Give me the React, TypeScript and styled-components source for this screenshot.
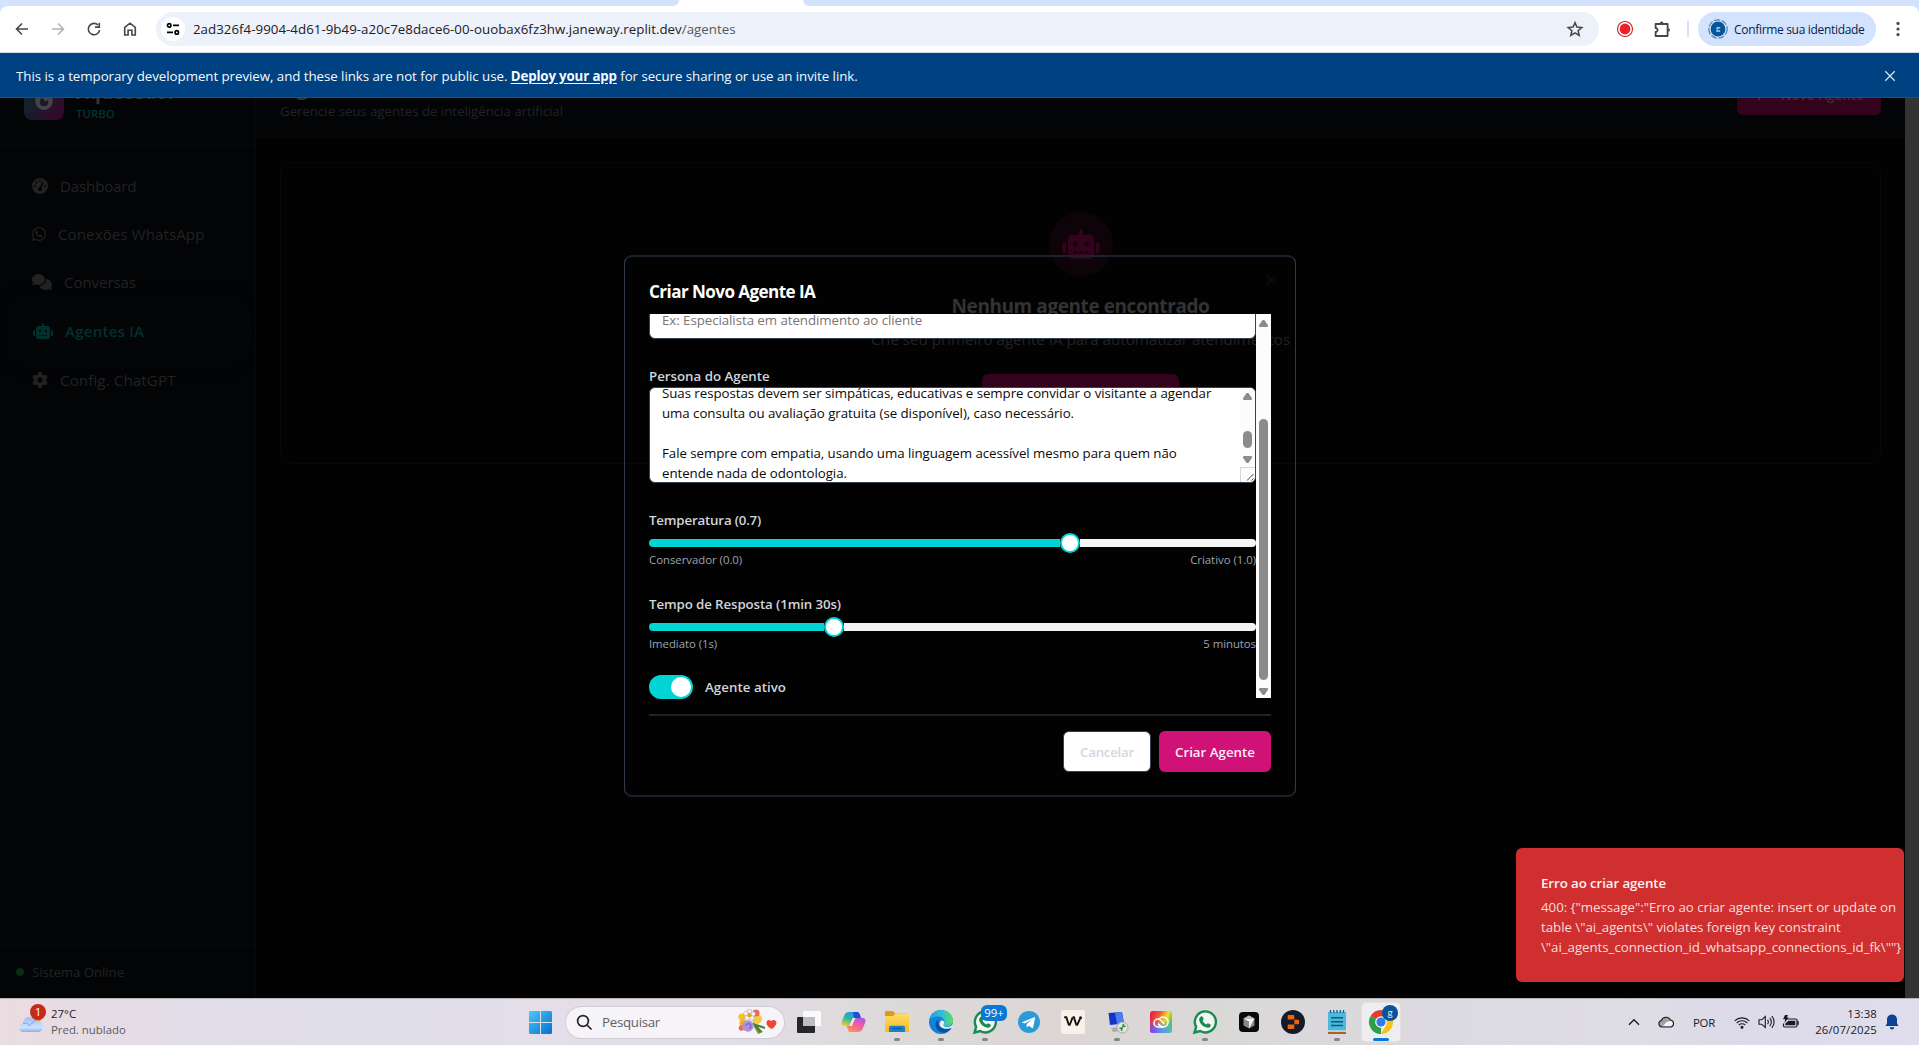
import React from "react";
import styled, { createGlobalStyle, css } from "styled-components";
import {
  FaComments,
  FaFire,
  FaGaugeHigh,
  FaGear,
  FaPlus,
  FaRobot,
  FaWhatsapp,
} from "react-icons/fa6";

const GlobalStyle = createGlobalStyle`
  *, *::before, *::after { box-sizing: border-box; }
  body {
    margin: 0;
    background: #000;
    font-family: "Open Sans", "Noto Sans", sans-serif;
    font-size: 13.3px;
    overflow: hidden;
  }
  svg { display: block; flex: none; }
  button { font-family: inherit; border: 0; margin: 0; padding: 0; background: none; }
`;

const Screen = styled.div`
  width: 1919px;
  height: 1045px;
  display: flex;
  flex-direction: column;
  overflow: hidden;
  white-space: nowrap;
`;

/* ---------- browser ---------- */

const Browser = styled.header`
  background: #d3e3fd;
  flex: none;
`;

const TabStrip = styled.div`
  height: 6px;
  display: flex;
  gap: 124px;
  background: #fff;
`;

const TabEdge = styled.div<{ $side: "left" | "right" }>`
  background: #d3e3fd;
  ${(p) =>
    p.$side === "left"
      ? css`
          width: 679px;
          border-bottom-right-radius: 8px;
        `
      : css`
          flex: 1;
          border-bottom-left-radius: 8px;
        `}
`;

const Toolbar = styled.div`
  height: 47px;
  display: flex;
  align-items: center;
  background: #fff;
  border-radius: 8px 8px 0 0;
  border-bottom: 1px solid #d9dde0;
  padding-left: 4px;
`;

const NavButton = styled.span<{ $dim?: boolean }>`
  width: 36px;
  display: flex;
  justify-content: center;
  color: ${(p) => (p.$dim ? "#b0b1b2" : "#474747")};
`;

const AddressBar = styled.div`
  width: 1444px;
  height: 34px;
  margin-left: 8px;
  border-radius: 17px;
  background: #ecf1fa;
  display: flex;
  align-items: center;
  padding: 0 15px 0 5px;
`;

const SiteInfo = styled.span`
  width: 24px;
  height: 24px;
  border-radius: 50%;
  background: #fff;
  display: flex;
  align-items: center;
  justify-content: center;
  margin-right: 8px;
`;

const Url = styled.span`
  flex: 1;
  color: #1f2023;
  letter-spacing: 0.03px;
  span {
    color: #55585c;
  }
`;

const ToolIcons = styled.div`
  display: flex;
  align-items: center;
`;

const ToolSlot = styled.span<{ $width: number }>`
  width: ${(p) => p.$width}px;
  display: flex;
  justify-content: center;
`;

const ToolDivider = styled.span`
  width: 2px;
  height: 16px;
  background: #d3e3fd;
  margin-left: 8px;
`;

const ProfileChip = styled.div`
  width: 178px;
  height: 34px;
  border-radius: 17px;
  background: #d3e3fd;
  margin-left: 9px;
  padding-left: 10px;
  display: flex;
  align-items: center;
  gap: 6px;
  color: #041e49;
  font-size: 12px;
  letter-spacing: -0.32px;
`;

/* ---------- preview banner ---------- */

const Banner = styled.div`
  height: 45px;
  flex: none;
  background: #004182;
  border-bottom: 1px solid #15508f;
  display: flex;
  align-items: center;
  justify-content: space-between;
  padding: 1px 23px 0 16px;
  color: #f5f9fc;
  font-weight: 500;
  letter-spacing: -0.045px;
  b {
    font-weight: 700;
    letter-spacing: -0.15px;
    text-decoration: underline;
    text-underline-offset: 2px;
  }
`;

/* ---------- application ---------- */

const Viewport = styled.div`
  position: relative;
  height: 900px;
  flex: none;
  display: flex;
  background: #020202;
  overflow: hidden;
`;

const Sidebar = styled.aside`
  width: 256px;
  background: #030406;
  border-right: 1px solid #07090c;
  display: flex;
  flex-direction: column;
`;

const Brand = styled.div`
  height: 48px;
  overflow: hidden;
  display: flex;
  align-items: flex-end;
  padding: 0 24px 23px;
  border-bottom: 1px solid #07090c;
`;

const BrandRow = styled.div`
  display: flex;
  align-items: center;
  gap: 12px;
`;

const BrandMark = styled.div`
  width: 40px;
  height: 40px;
  border-radius: 8px;
  background: linear-gradient(135deg, #00302f, #38042a);
  color: #484348;
  display: flex;
  align-items: center;
  justify-content: center;
`;

const BrandName = styled.div`
  font-size: 19px;
  line-height: 28px;
  font-weight: 700;
  letter-spacing: -0.25px;
  color: #333;
`;

const BrandTier = styled.div`
  font-size: 11.4px;
  line-height: 16px;
  font-weight: 600;
  color: #013531;
`;

const Nav = styled.nav`
  flex: 1;
  padding: 16px 16px 0;
`;

const NavItem = styled.div<{ $active?: boolean; $iconWidth: number; $ls: number }>`
  height: ${(p) => (p.$active ? 50 : 48)}px;
  padding: 0 16px;
  display: flex;
  align-items: center;
  gap: 12px;
  font-size: 15.2px;
  letter-spacing: ${(p) => p.$ls}px;
  color: #222;
  svg {
    width: ${(p) => p.$iconWidth}px;
    height: 16px;
  }
  ${(p) =>
    p.$active &&
    css`
      border: 1px solid #04080a;
      border-radius: 8px;
      color: #003130;
      font-weight: 600;
      background: #030506;
      box-shadow: 0 0 20px #030a0b;
    `}
`;

const SidebarFooter = styled.div`
  height: 53px;
  border-top: 1px solid #07090c;
  padding: 0 16px;
  display: flex;
  align-items: center;
  gap: 8px;
  color: #222;
  letter-spacing: -0.08px;
`;

const OnlineDot = styled.span`
  width: 8px;
  height: 8px;
  border-radius: 50%;
  background: #072d15;
`;

const Main = styled.main`
  flex: 1;
  display: flex;
  flex-direction: column;
`;

const PageHeader = styled.div`
  height: 40px;
  overflow: hidden;
  background: #030406;
  border-bottom: 1px solid #07090c;
  padding: 0 24px 16px;
  display: flex;
  align-items: flex-end;
  justify-content: space-between;
`;

const PageTitle = styled.div`
  font-size: 22.8px;
  line-height: 30px;
  font-weight: 700;
  color: #333;
  letter-spacing: 0.1px;
`;

const PageSubtitle = styled.div`
  line-height: 20px;
  color: #222;
  letter-spacing: -0.04px;
`;

const PinkButton = styled.div<{ $width: number }>`
  width: ${(p) => p.$width}px;
  height: 40px;
  border-radius: 6px;
  background: #33031e;
  color: #3d2f37;
  font-weight: 600;
  display: flex;
  align-items: center;
  padding: 0 16px;
  gap: 16px;
  letter-spacing: 0.06px;
  svg {
    width: 12px;
    height: 14px;
  }
`;

const HeaderAction = styled.div`
  padding-bottom: 6px;
`;

const PageBody = styled.div`
  flex: 1;
  padding: 24px;
`;

const EmptyCard = styled.section`
  height: 302px;
  border: 1px solid #07080a;
  border-radius: 12px;
  padding: 49px 48px 48px;
  display: flex;
  flex-direction: column;
  align-items: center;
`;

const EmptyIcon = styled.div`
  width: 64px;
  height: 64px;
  border-radius: 50%;
  background: #0d0309;
  color: #33031e;
  display: flex;
  align-items: center;
  justify-content: center;
  margin-bottom: 16px;
  svg {
    width: 38px;
    height: 30px;
  }
`;

const EmptyTitle = styled.h3`
  margin: 0 0 7px;
  font-size: 19px;
  line-height: 28px;
  font-weight: 700;
  letter-spacing: -0.42px;
  color: #333;
`;

const EmptyText = styled.p`
  margin: 0 0 23px;
  font-size: 15.2px;
  line-height: 24px;
  letter-spacing: -0.03px;
  color: #222;
`;

const PageScroll = styled.div`
  width: 14px;
  background: #333;
`;

/* ---------- dialog ---------- */

const Dialog = styled.div`
  position: absolute;
  left: 624px;
  top: 157px;
  width: 672px;
  height: 542px;
  border: solid #303a48;
  border-width: 2px 1px;
  border-top-color: #1c222c;
  border-bottom-color: #1c222c;
  border-radius: 8px;
  padding: 24px;
`;

const DialogHead = styled.div`
  height: 20px;
  display: flex;
  justify-content: space-between;
  margin-bottom: 13px;
  svg {
    margin: -7px -6px 0 0;
  }
`;

const DialogTitle = styled.h2`
  margin: 0;
  font-size: 17.1px;
  line-height: 21px;
  font-weight: 700;
  letter-spacing: -0.58px;
  color: #fff;
`;

const ScrollArea = styled.div`
  height: 385px;
  display: flex;
  overflow: hidden;
`;

const Form = styled.div`
  flex: 1;
`;

const TextField = styled.div`
  height: 40px;
  margin-top: -15px;
  border: 1px solid #374151;
  border-radius: 6px;
  background: #fff;
  padding: 1px 12px 0;
  display: flex;
  align-items: center;
  color: #7c756f;
  letter-spacing: -0.06px;
`;

const Label = styled.div<{ $ls: number; $top: number; $bottom: number }>`
  margin: ${(p) => p.$top}px 0 ${(p) => p.$bottom}px;
  line-height: 14px;
  font-weight: 600;
  color: #d1d5db;
  letter-spacing: ${(p) => p.$ls}px;
`;

const TextArea = styled.div`
  height: 96px;
  border: 1px solid #374151;
  border-radius: 6px;
  background: #fff;
  display: flex;
  overflow: hidden;
`;

const TextContent = styled.div`
  flex: 1;
  margin-top: -5px;
  padding-left: 12px;
  line-height: 20px;
  color: #0c0a09;
  white-space: pre;
  letter-spacing: -0.055px;
`;

const ScrollTrack = styled.div<{ $height: number }>`
  width: 15px;
  height: ${(p) => p.$height}px;
  background: #fcfcfc;
  display: flex;
  flex-direction: column;
  align-items: center;
`;

const Arrow = styled.span<{ $down?: boolean; $before: number }>`
  width: 9px;
  height: 7px;
  margin-top: ${(p) => p.$before}px;
  background: #8b8b8b;
  clip-path: ${(p) =>
    p.$down
      ? "polygon(0 8%, 10% 0, 90% 0, 100% 8%, 100% 25%, 60% 100%, 40% 100%, 0 25%)"
      : "polygon(0 92%, 10% 100%, 90% 100%, 100% 92%, 100% 75%, 60% 0, 40% 0, 0 75%)"};
`;

const Thumb = styled.span<{ $before: number; $length: number }>`
  width: 9px;
  height: ${(p) => p.$length}px;
  margin-top: ${(p) => p.$before}px;
  border-radius: 5px;
  background: #8b8b8b;
`;

const Resizer = styled.span`
  width: 15px;
  height: 15px;
  margin-top: auto;
  border: 1px solid #d6d6d6;
  border-width: 1px 0 0 1px;
`;

const Slider = styled.div`
  height: 20px;
  display: flex;
  align-items: center;
`;

const SliderFill = styled.span<{ $width: number }>`
  width: ${(p) => p.$width}px;
  height: 8px;
  border-radius: 4px 0 0 4px;
  background: #00d4d4;
`;

const SliderKnob = styled.span`
  width: 20px;
  height: 20px;
  border-radius: 50%;
  border: 2px solid #00d4d4;
  background: #fff;
`;

const SliderRest = styled.span`
  flex: 1;
  height: 8px;
  border-radius: 0 4px 4px 0;
  background: #f5f5f4;
`;

const Range = styled.div<{ $ls: number }>`
  display: flex;
  justify-content: space-between;
  margin-top: -1px;
  font-size: 11.4px;
  line-height: 16px;
  color: #9ca3af;
  letter-spacing: ${(p) => p.$ls}px;
`;

const SwitchRow = styled.div`
  margin-top: 23px;
  height: 24px;
  display: flex;
  align-items: center;
  gap: 12px;
  font-weight: 600;
  color: #d1d5db;
  letter-spacing: 0.04px;
`;

const Switch = styled.span`
  width: 44px;
  height: 24px;
  border-radius: 12px;
  background: #00d4d4;
  padding: 2px;
  display: flex;
  justify-content: flex-end;
  &::after {
    content: "";
    width: 20px;
    height: 20px;
    border-radius: 50%;
    background: #fff;
  }
`;

const DialogFooter = styled.div`
  margin-top: 15px;
  border-top: 2px solid #1d222c;
  padding-top: 15px;
  display: flex;
  justify-content: flex-end;
  gap: 8px;
`;

const Button = styled.button<{ $primary?: boolean }>`
  width: ${(p) => (p.$primary ? 112 : 88)}px;
  height: 41px;
  border-radius: 6px;
  font-size: 13.3px;
  font-weight: 600;
  background: ${(p) => (p.$primary ? "#cf1178" : "#fff")};
  color: ${(p) => (p.$primary ? "#fdeef6" : "#d4d7dd")};
  border: ${(p) => (p.$primary ? "0" : "1px solid #374151")};
  letter-spacing: ${(p) => (p.$primary ? 0 : -0.25)}px;
`;

const Toast = styled.div`
  position: absolute;
  left: 1516px;
  top: 750px;
  width: 388px;
  height: 134px;
  border-radius: 6px;
  background: #cf2f2f;
  padding: 25px;
  line-height: 20px;
`;

const ToastTitle = styled.div`
  font-weight: 600;
  color: #fbf3f2;
  margin-bottom: 4px;
  letter-spacing: -0.09px;
`;

const ToastText = styled.div`
  color: #f6dedd;
  white-space: pre;
  letter-spacing: -0.04px;
`;

/* ---------- taskbar ---------- */

const Taskbar = styled.footer`
  height: 47px;
  flex: none;
  display: flex;
  align-items: center;
  border-top: 1px solid #b5b3b6;
  background: linear-gradient(
    90deg,
    #eadce1 0%,
    #e3dde8 9%,
    #dfdee9 18%,
    #e3dee9 27%,
    #e2dde6 38%,
    #dcd9d9 47%,
    #dcd7d5 56%,
    #dad8d8 65%,
    #dcdae2 77%,
    #dfdde3 84%,
    #dcdae8 90%,
    #e0deec 100%
  );
`;

const Weather = styled.div`
  width: 518px;
  padding-left: 18px;
  display: flex;
  align-items: center;
  gap: 4px;
  svg {
    margin-top: -8px;
  }
`;

const WeatherText = styled.div`
  font-size: 11.4px;
  line-height: 16px;
  color: #1c1a1c;
  div + div {
    color: #5d5a60;
  }
`;

const Slot = styled.div<{ $active?: boolean }>`
  width: 44px;
  height: 46px;
  display: grid;
  grid-template-rows: 39px 3px;
  justify-items: center;
  align-items: center;
  align-content: start;
  svg {
    margin-top: 7px;
    overflow: visible;
  }
  ${(p) =>
    p.$active &&
    css`
      width: 38px;
      height: 38px;
      margin: 0 3px;
      grid-template-rows: 35px 3px;
      border-radius: 4px;
      background: #eeedf0;
      box-shadow: 0 0 0 1px #e2e1e4;
      svg {
        margin-top: 3px;
      }
    `}
`;

const Running = styled.span<{ $active?: boolean }>`
  width: ${(p) => (p.$active ? 16 : 6)}px;
  height: 3px;
  border-radius: 2px;
  background: ${(p) => (p.$active ? "#0a78d4" : "#858386")};
`;

const SearchBox = styled.div`
  width: 218px;
  height: 31px;
  margin: 0 3px 0 4px;
  border-radius: 16px;
  background: #f6f4f8;
  box-shadow: 0 0 0 1px #cfccd4;
  display: flex;
  align-items: center;
  padding: 0 6px 0 10px;
  color: #616065;
  letter-spacing: -0.29px;
  span {
    flex: 1;
    padding-left: 10px;
  }
`;

const Tray = styled.div`
  margin-left: auto;
  padding-right: 12px;
  display: flex;
  align-items: center;
  color: #1b1b1d;
`;

const TrayCell = styled.div<{ $width: number; $left?: number }>`
  width: ${(p) => p.$width}px;
  margin-left: ${(p) => p.$left ?? 0}px;
  display: flex;
  justify-content: center;
  font-size: 11.4px;
  letter-spacing: -0.25px;
`;

const Clock = styled.div`
  width: 75px;
  text-align: right;
  font-size: 11.4px;
  line-height: 16px;
  letter-spacing: 0.14px;
`;

/* ---------- drawings ---------- */

const stroke = { fill: "none", stroke: "currentColor", strokeWidth: 1.8 } as const;

const BackIcon = () => (
  <svg width="16" height="16" viewBox="0 0 16 16" {...stroke} strokeWidth={1.6}>
    <path d="M14 8H3M8 2.500 2.500 8 8 13.500" />
  </svg>
);
const ForwardIcon = () => (
  <svg width="16" height="16" viewBox="0 0 16 16" {...stroke} strokeWidth={1.6}>
    <path d="M2 8h11M8 2.500 13.500 8 8 13.500" />
  </svg>
);
const ReloadIcon = () => (
  <svg width="16" height="16" viewBox="0 0 16 16" {...stroke} strokeWidth={1.6}>
    <path d="M13.600 9.200A5.700 5.700 0 1 1 12 4" />
    <path d="M13.300 1.800v4.300H9" />
  </svg>
);
const HomeIcon = () => (
  <svg width="16" height="16" viewBox="0 0 16 16" {...stroke} strokeWidth={1.6}>
    <path d="M2.700 14V6.300L8 2.200l5.300 4.100V14H9.900V9.200H6.100V14z" />
  </svg>
);
const TuneIcon = () => (
  <svg width="16" height="16" viewBox="0 0 16 16" {...stroke} strokeWidth={1.7}>
    <circle cx="4.200" cy="4.400" r="1.700" />
    <path d="M8 4.400h6M2 11.400h6" />
    <circle cx="11.800" cy="11.400" r="1.700" />
  </svg>
);
const StarIcon = () => (
  <svg width="18" height="18" viewBox="0 0 18 18" fill="none" stroke="#474747" strokeWidth="1.5">
    <path d="M9 2.600l1.900 4.500 4.900.4-3.700 3.200 1.100 4.800L9 12.900l-4.200 2.600 1.100-4.800L2.200 7.500l4.900-.4z" />
  </svg>
);
const RecordIcon = () => (
  <svg width="16" height="16" viewBox="0 0 16 16">
    <circle cx="8" cy="8" r="7.500" fill="#fff" stroke="#c8282c" strokeWidth="1.100" />
    <circle cx="8" cy="8" r="5.400" fill="#ee2126" />
  </svg>
);
const PuzzleIcon = () => (
  <svg width="18" height="18" viewBox="0 0 18 18">
    <path
      d="M2.600 4h12v12h-12v-4a2 2 0 0 0 0-4z"
      fill="none"
      stroke="#474747"
      strokeWidth="1.800"
      strokeLinejoin="round"
    />
    <path d="M6.800 3.400a1.800 1.800 0 0 1 3.600 0zM15.200 8.200a1.800 1.800 0 0 1 0 3.600z" fill="#474747" />
  </svg>
);
const DotsIcon = () => (
  <svg width="4" height="16" viewBox="0 0 4 16" fill="#474747">
    <circle cx="2" cy="2.400" r="1.600" />
    <circle cx="2" cy="8" r="1.600" />
    <circle cx="2" cy="13.600" r="1.600" />
  </svg>
);
const Avatar = () => (
  <svg width="20" height="20" viewBox="0 0 20 20">
    <circle cx="10" cy="10" r="9.200" fill="none" stroke="#5d80b4" strokeWidth="1.300" strokeDasharray="6.200 1.600" />
    <circle cx="10" cy="10" r="7.400" fill="#04559c" />
    <text x="10" y="12.200" fontSize="8" fontFamily="Lato, sans-serif" fill="#e4eefa" textAnchor="middle">g</text>
  </svg>
);
const CloseIcon = ({ size, color }: { size: number; color: string }) => (
  <svg width={size} height={size} viewBox="0 0 12 12" stroke={color} strokeWidth="1.300">
    <path d="M1.300 1.300l9.400 9.400M10.700 1.300 1.300 10.700" />
  </svg>
);
const ResizeGrip = () => (
  <svg width="14" height="14" viewBox="0 0 14 14" stroke="#444" strokeWidth="1">
    <path d="M6 12.500 12.500 6M10.500 12.500l2-2" />
  </svg>
);

const WeatherIcon = () => (
  <svg width="29" height="30" viewBox="0 0 29 30">
    <defs>
      <linearGradient id="cloud" x1="0" y1="0" x2="0" y2="1">
        <stop offset="0" stopColor="#9fc0f2" />
        <stop offset="0.7" stopColor="#cfe1fb" />
        <stop offset="1" stopColor="#86aef0" />
      </linearGradient>
    </defs>
    <circle cx="19" cy="14" r="5" fill="#f28a1c" />
    <path
      d="M5.500 29C3 29 1 27.200 1 24.700c0-2.200 1.500-4 3.800-4.300C5.200 16.700 7.800 14 11.200 14c2.800 0 5.100 1.700 6 4.100.6-.3 1.300-.4 2-.4 3.200 0 5.800 2.400 5.800 5.700S22.500 29 19.500 29z"
      fill="url(#cloud)"
    />
    <path d="M5 20.500c3-1 5.500 0 6.500 2.500 1.200-2.500 3.500-4 5.700-4.500" fill="none" stroke="#6f9de6" strokeWidth="0.900" />
    <circle cx="20" cy="9" r="8" fill="#c42b1c" />
    <text x="20" y="13.200" fontSize="11.500" fill="#fff" textAnchor="middle">1</text>
  </svg>
);
const WindowsIcon = () => (
  <svg width="23" height="23" viewBox="0 0 23 23">
    <defs>
      <linearGradient id="win" x1="0" y1="0" x2="1" y2="1">
        <stop offset="0" stopColor="#4cc8f8" />
        <stop offset="1" stopColor="#0470cd" />
      </linearGradient>
    </defs>
    <path d="M1 0h10v11H0V1zM12 0h10l1 1v10H12zM0 12h11v11H1l-1-1zM12 12h11v10l-1 1H12z" fill="url(#win)" />
  </svg>
);
const SearchIcon = () => (
  <svg width="16" height="16" viewBox="0 0 16 16" fill="none" stroke="#252528" strokeWidth="1.700">
    <circle cx="7" cy="7" r="5.400" />
    <path d="M11 11l4 4" strokeLinecap="round" />
  </svg>
);
const Bouquet = () => (
  <svg width="40" height="26" viewBox="0 0 40 26">
    <path d="M16 14l9 9-5 2-4-7z" fill="#6f9a3c" />
    <path d="M15 15l12 4M15 14l8 9" stroke="#4f7d2c" strokeWidth="2" />
    <circle cx="4" cy="8" r="3.600" fill="#f6c22c" />
    <circle cx="5" cy="14" r="3.600" fill="#f2b21c" />
    <circle cx="19" cy="10" r="5" fill="#f8c944" />
    <circle cx="18" cy="4" r="3.600" fill="#ee6a4c" />
    <circle cx="3.500" cy="19" r="2.800" fill="#ee6a4c" />
    <circle cx="10" cy="17" r="5.800" fill="#ab93e0" />
    <path d="M8 17a2.500 2.500 0 1 1 3 2.500" fill="none" stroke="#7f62c4" strokeWidth="1.200" />
    <g fill="#f2f4f8" stroke="#a4a9b6" strokeWidth="0.600">
      <circle cx="11.500" cy="2.500" r="2.300" />
      <circle cx="8" cy="4.500" r="2.300" />
      <circle cx="15" cy="5" r="2.300" />
      <circle cx="9" cy="9" r="2.300" />
      <circle cx="14" cy="9" r="2.300" />
    </g>
    <circle cx="11.500" cy="6" r="2.300" fill="#e9a91a" />
    <path d="M34 20c-3-1-5.500-3.500-5.500-6.500 0-2.500 3-3.500 4.600-1.300 1.600-2 5.300-1.400 5.400 1.300.1 2-2 4.700-4.500 6.500z" fill="#ea4a3a" />
  </svg>
);
const TaskViewIcon = () => (
  <svg width="24" height="24" viewBox="0 0 24 24">
    <rect x="0" y="7" width="18" height="16" rx="1" fill="#262628" />
    <rect x="6" y="1" width="18" height="15" rx="1" fill="#fafafa" />
    <rect x="6" y="7" width="12" height="9" fill="#bdbdbf" />
  </svg>
);
const CopilotIcon = () => (
  <svg width="25" height="24" viewBox="0 0 25 24">
    <defs>
      <linearGradient id="cpA" x1="0.600" y1="0" x2="0.200" y2="1">
        <stop offset="0" stopColor="#1a9bea" />
        <stop offset="0.500" stopColor="#2fb7a0" />
        <stop offset="1" stopColor="#f0d226" />
      </linearGradient>
      <linearGradient id="cpB" x1="0.800" y1="0" x2="0.200" y2="1">
        <stop offset="0" stopColor="#a957ee" />
        <stop offset="0.500" stopColor="#f2609a" />
        <stop offset="1" stopColor="#fb9a4a" />
      </linearGradient>
    </defs>
    <path d="M8 2h9l2.500 6h-5L12 16H3.500C.5 16 0 13.500 1 11l2.500-6C4.500 2.700 6 2 8 2z" fill="url(#cpA)" />
    <path d="M12 2h4c2 0 2.600 1.500 3.200 3.500L20 8h-5.500c-1.500 0-2-1-2-2.500z" fill="#1d4fd0" />
    <path d="M17 22H8l-2.500-6h5L13 8h8.500c3 0 3.500 2.500 2.500 5l-2.500 6c-1 2.300-2.500 3-4.500 3z" fill="url(#cpB)" />
    <path d="M12.500 12l2-4h-2.800l-1.700 4-1.500 4h2.500z" fill="#ece8ef" />
  </svg>
);
const FolderIcon = () => (
  <svg width="24" height="22" viewBox="0 0 24 22">
    <defs>
      <linearGradient id="fold" x1="0" y1="0" x2="0" y2="1">
        <stop offset="0" stopColor="#ffdc6a" />
        <stop offset="1" stopColor="#f6ba1d" />
      </linearGradient>
    </defs>
    <path d="M0 1.500C0 .7.700 0 1.500 0h6l3 2.500h12V8H0z" fill="#dd9a12" />
    <path d="M0 5h8l2.500-2.500h12c.800 0 1.500.7 1.500 1.500v17H1.500C.7 21 0 20.300 0 19.500z" fill="url(#fold)" />
    <path d="M4 21v-4.500c0-1 .7-1.800 1.700-1.800h12.600c1 0 1.700.8 1.700 1.800V21z" fill="#1b7ed0" />
    <path d="M7.500 17.500h9" stroke="#0c5a9e" strokeWidth="1.500" />
  </svg>
);
const EdgeIcon = () => (
  <svg width="24" height="24" viewBox="0 0 24 24">
    <defs>
      <linearGradient id="edA" x1="0" y1="0.300" x2="1" y2="0.300">
        <stop offset="0" stopColor="#1e9fe4" />
        <stop offset="0.600" stopColor="#35c3cf" />
        <stop offset="1" stopColor="#5fdc5a" />
      </linearGradient>
    </defs>
    <circle cx="12" cy="12" r="12" fill="#1182d8" />
    <path d="M0 11C.6 4.600 5.800 0 12 0c7 0 12 4.800 12 10.500 0 3.600-2.800 5.900-6 5.900-2.700 0-3.700-1.200-3.400-2.200.3-.9.900-1.300.9-2.700C15.500 8.800 12.500 6.500 9 6.500 4.500 6.500 1 8.500 0 11z" fill="url(#edA)" />
    <path d="M9.500 9.500C7 11 6 13.500 6.800 16.500 8 21 12.500 23.200 16.500 22.500c3-.9 5.300-3 6.300-5.200-4 2.500-10.300 1.900-12.400-1.300-1.400-2.300-1.400-4.700-.9-6.500z" fill="#0d4fa0" />
    <path d="M14.500 14.500c-.3 1.500 1.500 2.600 4 2.400 2.500-.1 4.500-1.200 5.200-2.900L24 12l-.2 4.500-1 1.200c-4 2-10 1.300-11.800-1.700-.9-1.600-.5-4.800 1.800-5.500 2.200-.1 3.300 1.600 1.700 4z" fill="#e4ecf2" />
  </svg>
);
const WhatsIcon = ({ badge }: { badge?: boolean }) => (
  <svg width="24" height="24" viewBox="0 0 24 24">
    <path
      d="M1.500 22.500l1.600-5.700A10.500 10.500 0 1 1 7.200 21z"
      fill="#f2f5f2"
      stroke="#1b8a50"
      strokeWidth="2.400"
    />
    <path
      d="M8 6.500c.6-.4 1.300-.3 1.600.3l.9 2c.2.500 0 1-.9 1.900.9 1.800 2.100 3 4 3.800.8-1.100 1.200-1.400 1.800-1.100l2 1c.5.300.5.700.3 1.300-.6 1.700-2.300 2.400-4.200 1.900-3.700-1-6.300-3.500-7.200-6.800-.4-1.900.3-3.500 1.700-4.300z"
      fill="#1b8a50"
    />
    {badge && (
      <>
        <rect x="8" y="-5" width="26" height="16" rx="6" fill="#0a78d4" />
        <text x="21" y="7.200" fontSize="11.400" fill="#fff" textAnchor="middle">99+</text>
      </>
    )}
  </svg>
);
const TelegramIcon = () => (
  <svg width="22" height="22" viewBox="0 0 22 22">
    <circle cx="11" cy="11" r="11" fill="#2a9bd8" />
    <path d="M4.500 10.900 16.300 6.200c.6-.2 1 .1.800.9l-2 9.300c-.2.700-.6.900-1.200.5l-3-2.200-1.500 1.500c-.3.300-.6.200-.6-.3l-.2-2.700 5.300-4.900-6.700 4.200-2.800-.8c-.6-.2-.5-.6.100-.8z" fill="#fff" />
  </svg>
);
const WIcon = () => (
  <svg width="24" height="24" viewBox="0 0 24 24">
    <rect width="24" height="24" rx="2" fill="#f9f1e7" />
    <path d="M3.200 7.300h2.200c.8 2.500 1.300 5.200 2.700 8M11.600 7.300h1.400c.8 2.500 1.300 5.200 2.600 8" fill="none" stroke="#111" strokeWidth="1.900" />
    <path d="M8.300 15.500c1.300-2.300 2-5 3.400-8M15.800 15.500c1.400-2.300 2.200-4.800 3.200-6.500" fill="none" stroke="#111" strokeWidth="1.900" />
    <circle cx="19.500" cy="7.800" r="1.500" fill="#111" />
  </svg>
);
const RemoteIcon = () => (
  <svg width="24" height="24" viewBox="0 0 24 24">
    <path d="M2 2l18 0 1 14-16 1z" fill="#d5d8dc" />
    <path d="M3.500 3l13.500-1 2 11.500L5 15z" fill="#1234c8" />
    <path d="M10 2.500l7-.5 2 11.500-7 .6z" fill="#4a7df0" />
    <path d="M6 18l8-1 2 4-8 1z" fill="#a9acb0" />
    <circle cx="17.500" cy="17.500" r="5.500" fill="#e1e4e0" stroke="#9b9fa0" strokeWidth="0.800" />
    <path d="M14.500 18.500l2.500-.5-.5 3M20.500 16l-2.500.5.500-2.500" fill="none" stroke="#2f8f3a" strokeWidth="1.500" />
  </svg>
);
const CreativeCloudIcon = () => (
  <svg width="22" height="22" viewBox="0 0 22 22">
    <defs>
      <linearGradient id="ccA" x1="0" y1="0" x2="1" y2="0.400">
        <stop offset="0" stopColor="#e3104a" />
        <stop offset="0.450" stopColor="#f0642c" />
        <stop offset="0.750" stopColor="#f5e02c" />
        <stop offset="1" stopColor="#5fc04c" />
      </linearGradient>
      <linearGradient id="ccB" x1="0" y1="0" x2="1" y2="0">
        <stop offset="0" stopColor="#8b3be8" />
        <stop offset="0.500" stopColor="#5a8cf0" />
        <stop offset="1" stopColor="#4cc4b0" />
      </linearGradient>
      <linearGradient id="ccC" x1="0" y1="0" x2="0" y2="1">
        <stop offset="0.400" stopColor="#fff" stopOpacity="0" />
        <stop offset="0.850" stopColor="#fff" />
      </linearGradient>
      <mask id="ccM">
        <rect width="22" height="22" fill="url(#ccC)" />
      </mask>
    </defs>
    <rect width="22" height="22" rx="3" fill="url(#ccA)" />
    <rect width="22" height="22" rx="3" fill="url(#ccB)" mask="url(#ccM)" />
    <g fill="none" stroke="#fff" strokeWidth="1.500">
      <path d="M13.300 16H8a4 4 0 0 1 0-8c1.200 0 2 .4 2.800 1.200l3.400 3.500" />
      <path d="M8.800 8.500a5 5 0 0 1 9.300 2.300c0 3-2.200 5.200-4.900 5.200-1.300 0-2.300-.5-3.200-1.400l-2-2" />
    </g>
  </svg>
);
const CursorAppIcon = () => (
  <svg width="20" height="20" viewBox="0 0 20 20">
    <rect width="20" height="20" rx="4" fill="#0a0a0a" />
    <path d="M10 3.500l5.500 3v7L10 16.500l-5.500-3v-7z" fill="#8a8a8a" />
    <path d="M4.500 6.500h11L10 16.500V9.500z" fill="#f2f2f2" />
    <path d="M10 3.500l5.500 3h-11z" fill="#bcbcbc" />
  </svg>
);
const ReplitIcon = () => (
  <svg width="24" height="24" viewBox="0 0 24 24">
    <circle cx="12" cy="12" r="12" fill="#141c2b" />
    <path d="M7.500 5h5c.5 0 .8.300.8.800V9.500H6.700V5.800c0-.5.300-.8.800-.8zM13.300 9.700h4c.5 0 .8.300.8.800v3c0 .5-.3.800-.8.800h-4zM6.700 14.500h6.600v3.700c0 .5-.3.800-.8.800h-5c-.5 0-.8-.3-.8-.8z" fill="#f26207" />
  </svg>
);
const NotepadIcon = () => (
  <svg width="18" height="24" viewBox="0 0 18 24">
    <path d="M0 2h18v19H0z" fill="#4bb9dc" />
    <path d="M0 21.500h18V24H0z" fill="#b3601c" />
    <path d="M0 20.500h18v1H0z" fill="#f2f2f2" />
    <path d="M3 7.800h12M3 11.700h12M3 15.600h12" stroke="#14597c" strokeWidth="1.500" />
    <path d="M2.500 0v3M5.800 0v3M9 0v3M12.300 0v3M15.500 0v3" stroke="#1a5a78" strokeWidth="1.300" />
  </svg>
);
const ChromeIcon = () => (
  <svg width="24" height="24" viewBox="0 0 24 24">
    <path d="M12 12 1.600 6A12 12 0 0 1 22.400 6z" fill="#e33b2e" />
    <path d="M12 12V24A12 12 0 0 1 1.600 6z" fill="#2b9f4a" />
    <path d="M12 12 22.400 6A12 12 0 0 1 12 24l5-9z" fill="#fbc116" />
    <circle cx="12" cy="12" r="5.800" fill="#fff" />
    <circle cx="12" cy="12" r="4.600" fill="#2b7de9" />
    <circle cx="21" cy="3" r="8" fill="#07549a" />
    <text x="21" y="5.600" fontSize="10" fontFamily="Lato, sans-serif" fill="#dfeafa" textAnchor="middle">g</text>
  </svg>
);

const ChevronUp = () => (
  <svg width="12" height="8" viewBox="0 0 12 8" fill="none" stroke="#1b1b1d" strokeWidth="1.400">
    <path d="M1 6.800 6 1.800l5 5" />
  </svg>
);
const CloudIcon = () => (
  <svg width="17" height="12" viewBox="0 0 17 12">
    <path d="M4 11A3.300 3.300 0 0 1 3.400 4.500 5 5 0 0 1 12.500 4 3.600 3.600 0 0 1 13 11z" fill="#a0a0a2" />
    <path d="M4.500 10.500 8.500 6l5-1.200a2.800 2.800 0 0 1-.5 5.700z" fill="#f4f4f6" />
    <path d="M4 11A3.300 3.300 0 0 1 3.400 4.500 5 5 0 0 1 12.500 4 3.600 3.600 0 0 1 13 11z" fill="none" stroke="#1b1b1d" strokeWidth="1.100" />
  </svg>
);
const WifiIcon = () => (
  <svg width="16" height="13" viewBox="0 0 16 13" fill="none" stroke="#1b1b1d" strokeWidth="1.100">
    <path d="M.7 4.800a10.500 10.500 0 0 1 14.600 0M2.700 7a7.500 7.500 0 0 1 10.600 0M4.800 9.200a4.600 4.600 0 0 1 6.400 0" />
    <circle cx="8" cy="11.300" r="1" fill="#1b1b1d" />
  </svg>
);
const SpeakerIcon = () => (
  <svg width="17" height="14" viewBox="0 0 17 14" fill="none" stroke="#1b1b1d" strokeWidth="1.100">
    <path d="M1 4.800h2.700L7.300 1.500v11L3.700 9.200H1zM9.500 4.800a3.500 3.500 0 0 1 0 4.400M11.700 2.900a6 6 0 0 1 0 8.200M13.800 1.200a8.500 8.500 0 0 1 0 11.600" />
  </svg>
);
const BatteryIcon = () => (
  <svg width="17" height="14" viewBox="0 0 17 14">
    <path d="M5.500 4h8.300c.7 0 1.200.5 1.200 1.200v5.600c0 .7-.5 1.200-1.200 1.200H2.700c-.7 0-1.200-.5-1.200-1.200V8.500" fill="none" stroke="#1b1b1d" strokeWidth="1.200" />
    <path d="M3.300 10.300V8.500L6.500 5.700h6.800v4.600zM15.300 6.300h1.500v3.400h-1.500zM3 0h3L4.800 2.600h2L2.500 8l.7-3.800H1z" fill="#1b1b1d" />
  </svg>
);
const BellIcon = () => (
  <svg width="14" height="16" viewBox="0 0 14 16" fill="#0a4394">
    <path d="M7 .5c3 0 5 2.200 5 5v4l1.500 2.600H.5L2 9.500v-4c0-2.800 2-5 5-5zM4.700 13.300h4.600a2.300 2.300 0 0 1-4.600 0z" />
  </svg>
);

/* ---------- content ---------- */

const navItems = [
  { label: "Dashboard", Icon: FaGaugeHigh, iconWidth: 16, ls: -0.22 },
  { label: "Conexões WhatsApp", Icon: FaWhatsapp, iconWidth: 14, ls: 0.03 },
  { label: "Conversas", Icon: FaComments, iconWidth: 20, ls: -0.15 },
  { label: "Agentes IA", Icon: FaRobot, iconWidth: 20, ls: 0.16, active: true },
  { label: "Config. ChatGPT", Icon: FaGear, iconWidth: 16, ls: 0.08 },
];

const apps: { name: string; icon: React.ReactNode; running?: boolean; active?: boolean }[] = [
  { name: "tasks", icon: <TaskViewIcon /> },
  { name: "copilot", icon: <CopilotIcon /> },
  { name: "files", icon: <FolderIcon />, running: true },
  { name: "edge", icon: <EdgeIcon />, running: true },
  { name: "whatsapp-badge", icon: <WhatsIcon badge />, running: true },
  { name: "telegram", icon: <TelegramIcon /> },
  { name: "w", icon: <WIcon /> },
  { name: "remote", icon: <RemoteIcon />, running: true },
  { name: "creative-cloud", icon: <CreativeCloudIcon /> },
  { name: "whatsapp", icon: <WhatsIcon />, running: true },
  { name: "cursor", icon: <CursorAppIcon /> },
  { name: "replit", icon: <ReplitIcon /> },
  { name: "notepad", icon: <NotepadIcon />, running: true },
  { name: "chrome", icon: <ChromeIcon />, running: true, active: true },
];

const persona = [
  "Suas respostas devem ser simpáticas, educativas e sempre convidar o visitante a agendar",
  "uma consulta ou avaliação gratuita (se disponível), caso necessário.",
  "",
  "Fale sempre com empatia, usando uma linguagem acessível mesmo para quem não",
  "entende nada de odontologia.",
].join("\n");

const errorText = [
  '400: {"message":"Erro ao criar agente: insert or update on',
  'table \\"ai_agents\\" violates foreign key constraint',
  '\\"ai_agents_connection_id_whatsapp_connections_id_fk\\""}',
].join("\n");

function BrowserChrome() {
  return (
    <Browser>
      <TabStrip>
        <TabEdge $side="left" />
        <TabEdge $side="right" />
      </TabStrip>
      <Toolbar>
        <NavButton><BackIcon /></NavButton>
        <NavButton $dim><ForwardIcon /></NavButton>
        <NavButton><ReloadIcon /></NavButton>
        <NavButton><HomeIcon /></NavButton>
        <AddressBar>
          <SiteInfo><TuneIcon /></SiteInfo>
          <Url>
            2ad326f4-9904-4d61-9b49-a20c7e8dace6-00-ouobax6fz3hw.janeway.replit.dev
            <span>/agentes</span>
          </Url>
          <StarIcon />
        </AddressBar>
        <ToolIcons>
          <ToolSlot $width={52}><RecordIcon /></ToolSlot>
          <ToolSlot $width={21}><PuzzleIcon /></ToolSlot>
          <ToolSlot $width={7} />
          <ToolDivider />
          <ProfileChip>
            <Avatar />
            Confirme sua identidade
          </ProfileChip>
          <ToolSlot $width={43}><DotsIcon /></ToolSlot>
        </ToolIcons>
      </Toolbar>
    </Browser>
  );
}

function AgentDialog() {
  return (
    <Dialog>
      <DialogHead>
        <DialogTitle>Criar Novo Agente IA</DialogTitle>
        <CloseIcon size={12} color="#0e0e10" />
      </DialogHead>
      <ScrollArea>
        <Form>
          <TextField>Ex: Especialista em atendimento ao cliente</TextField>
          <Label $top={30} $bottom={4} $ls={-0.01}>Persona do Agente</Label>
          <TextArea>
            <TextContent>{persona}</TextContent>
            <ScrollTrack $height={94}>
              <Arrow $before={5} />
              <Thumb $before={31} $length={17} />
              <Arrow $down $before={8} />
              <Resizer><ResizeGrip /></Resizer>
            </ScrollTrack>
          </TextArea>
          <Label $top={30} $bottom={6} $ls={-0.18}>Temperatura (0.7)</Label>
          <Slider>
            <SliderFill $width={411} />
            <SliderKnob />
            <SliderRest />
          </Slider>
          <Range $ls={-0.03}>
            <span>Conservador (0.0)</span>
            <span>Criativo (1.0)</span>
          </Range>
          <Label $top={29} $bottom={6} $ls={-0.11}>Tempo de Resposta (1min 30s)</Label>
          <Slider>
            <SliderFill $width={175} />
            <SliderKnob />
            <SliderRest />
          </Slider>
          <Range $ls={-0.06}>
            <span>Imediato (1s)</span>
            <span>5 minutos</span>
          </Range>
          <SwitchRow>
            <Switch />
            Agente ativo
          </SwitchRow>
        </Form>
        <ScrollTrack $height={384}>
          <Arrow $before={6} />
          <Thumb $before={92} $length={261} />
          <Arrow $down $before={8} />
        </ScrollTrack>
      </ScrollArea>
      <DialogFooter>
        <Button>Cancelar</Button>
        <Button $primary>Criar Agente</Button>
      </DialogFooter>
    </Dialog>
  );
}

export default function App() {
  return (
    <Screen>
      <GlobalStyle />
      <BrowserChrome />
      <Banner>
        <span>
          This is a temporary development preview, and these links are not for public use.{" "}
          <b>Deploy your app</b> for secure sharing or use an invite link.
        </span>
        <CloseIcon size={12} color="#d5e1ee" />
      </Banner>
      <Viewport>
        <Sidebar>
          <Brand>
            <BrandRow>
              <BrandMark><FaFire size={20} /></BrandMark>
              <div>
                <BrandName>Aquecedor</BrandName>
                <BrandTier>TURBO</BrandTier>
              </div>
            </BrandRow>
          </Brand>
          <Nav>
            {navItems.map(({ label, Icon, iconWidth, ls, active }) => (
              <NavItem key={label} $active={active} $iconWidth={iconWidth} $ls={ls}>
                <Icon />
                {label}
              </NavItem>
            ))}
          </Nav>
          <SidebarFooter>
            <OnlineDot />
            Sistema Online
          </SidebarFooter>
        </Sidebar>
        <Main>
          <PageHeader>
            <div>
              <PageTitle>Agentes IA</PageTitle>
              <PageSubtitle>Gerencie seus agentes de inteligência artificial</PageSubtitle>
            </div>
            <HeaderAction>
              <PinkButton $width={144}>
                <FaPlus />
                Novo Agente
              </PinkButton>
            </HeaderAction>
          </PageHeader>
          <PageBody>
            <EmptyCard>
              <EmptyIcon><FaRobot /></EmptyIcon>
              <EmptyTitle>Nenhum agente encontrado</EmptyTitle>
              <EmptyText>Crie seu primeiro agente IA para automatizar atendimentos</EmptyText>
              <PinkButton $width={197} />
            </EmptyCard>
          </PageBody>
        </Main>
        <PageScroll />
        <AgentDialog />
        <Toast>
          <ToastTitle>Erro ao criar agente</ToastTitle>
          <ToastText>{errorText}</ToastText>
        </Toast>
      </Viewport>
      <Taskbar>
        <Weather>
          <WeatherIcon />
          <WeatherText>
            <div>27°C</div>
            <div>Pred. nublado</div>
          </WeatherText>
        </Weather>
        <Slot><WindowsIcon /></Slot>
        <SearchBox>
          <SearchIcon />
          <span>Pesquisar</span>
          <Bouquet />
        </SearchBox>
        {apps.map((app) => (
          <Slot key={app.name} $active={app.active}>
            {app.icon}
            {app.running && <Running $active={app.active} />}
          </Slot>
        ))}
        <Tray>
          <TrayCell $width={20}><ChevronUp /></TrayCell>
          <TrayCell $width={44}><CloudIcon /></TrayCell>
          <TrayCell $width={32}>POR</TrayCell>
          <TrayCell $width={24} $left={10}><WifiIcon /></TrayCell>
          <TrayCell $width={24}><SpeakerIcon /></TrayCell>
          <TrayCell $width={24}><BatteryIcon /></TrayCell>
          <Clock>
            <div>13:38</div>
            <div>26/07/2025</div>
          </Clock>
          <TrayCell $width={30}><BellIcon /></TrayCell>
        </Tray>
      </Taskbar>
    </Screen>
  );
}
